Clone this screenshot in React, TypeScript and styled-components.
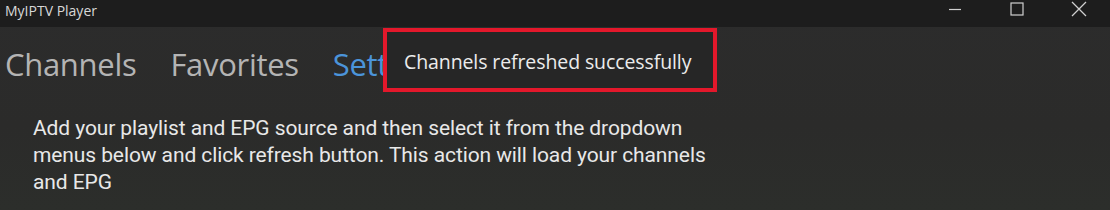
import styled, { createGlobalStyle } from "styled-components";

const Global = createGlobalStyle`
  html, body {
    margin: 0;
    padding: 0;
    background: #2a2b2a;
  }
  * {
    box-sizing: border-box;
  }
`;

const Window = styled.div`
  width: 1110px;
  height: 210px;
  overflow: hidden;
  display: flex;
  flex-direction: column;
  background: linear-gradient(180deg, #2c2c2c 0%, #2b2b2a 60%, #2c2e2b 100%);
  font-family: "Open Sans", "Noto Sans", sans-serif;
  position: relative;
`;

const TitleBar = styled.div`
  height: 27px;
  flex: none;
  display: flex;
  align-items: flex-start;
  background: #1d1d1d;
  color: #d8d8d8;
`;

const Title = styled.div`
  padding: 1px 0 0 5px;
  font-size: 14px;
  flex: 1;
`;

const Controls = styled.div`
  display: flex;
`;

const CtrlButton = styled.div`
  width: 62px;
  height: 18px;
  display: flex;
  align-items: center;
  justify-content: center;
  color: #d0d0d0;
`;

const Tabs = styled.div`
  display: flex;
  gap: 34px;
  padding: 16px 0 0 5px;
  height: 80px;
`;

const Tab = styled.div<{ $active?: boolean }>`
  font-size: 31px;
  font-weight: 400;
  letter-spacing: -0.3px;
  line-height: 42px;
  color: ${({ $active }) => ($active ? "#4b94da" : "#b4b4b4")};
`;

const Description = styled.p`
  margin: 0;
  padding: 8px 0 0 33px;
  width: 740px;
  font-family: Roboto, "Open Sans", sans-serif;
  font-size: 21px;
  line-height: 27px;
  color: #e8e8e8;
  letter-spacing: -0.1px;
`;

const Toast = styled.div`
  position: absolute;
  left: 383px;
  top: 28px;
  width: 334px;
  height: 64px;
  border: 4px solid #e3182b;
  background: #262626;
  display: flex;
  align-items: center;
  padding: 2px 0 0 17px;
  font-size: 19.5px;
  letter-spacing: -0.1px;
  color: #ececec;
`;

export default function App() {
  return (
    <>
      <Global />
      <Window>
        <TitleBar>
          <Title>MyIPTV Player</Title>
          <Controls>
            <CtrlButton>
              <svg width="14" height="14" viewBox="0 0 14 14">
                <path d="M1 7.5h12" stroke="currentColor" strokeWidth="1.2" />
              </svg>
            </CtrlButton>
            <CtrlButton>
              <svg width="14" height="14" viewBox="0 0 14 14">
                <rect x="1" y="1" width="12" height="12" fill="none" stroke="currentColor" strokeWidth="1.2" />
              </svg>
            </CtrlButton>
            <CtrlButton>
              <svg width="16" height="16" viewBox="0 0 16 16">
                <path d="M1 1L15 15M15 1L1 15" stroke="currentColor" strokeWidth="1.3" />
              </svg>
            </CtrlButton>
          </Controls>
        </TitleBar>
        <Tabs>
          <Tab>Channels</Tab>
          <Tab>Favorites</Tab>
          <Tab $active>Settings</Tab>
        </Tabs>
        <Description>
          Add your playlist and EPG source and then select it from the dropdown
          menus below and click refresh button. This action will load your
          channels and EPG
        </Description>
        <Toast>Channels refreshed successfully</Toast>
      </Window>
    </>
  );
}
